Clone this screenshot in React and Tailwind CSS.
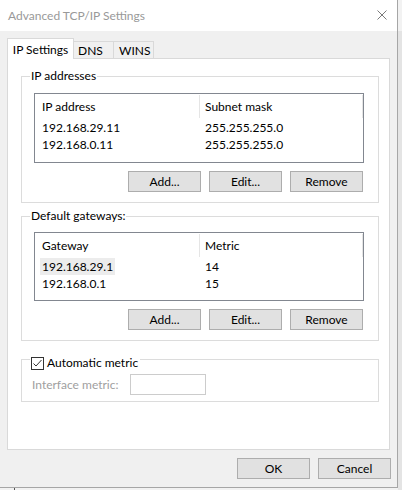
import React from "react";

// Windows-style "Advanced TCP/IP Settings" dialog

function Btn({ children, className = "" }) {
  return (
    <button
      type="button"
      className={`flex h-[21px] w-[73px] items-center justify-center border border-[#adadad] bg-[#e1e1e1] text-[12px] leading-none text-black ${className}`}
    >
      {children}
    </button>
  );
}

function ListView({ cols, rows, selected = -1, className = "" }) {
  return (
    <div className={`border border-[#828790] bg-white ${className}`}>
      <div className="flex h-[25px] items-center">
        <div className="flex h-[23px] w-[165px] items-center border-r border-[#e5e5e5] pl-[7px]">
          {cols[0]}
        </div>
        <div className="flex h-[23px] w-[163px] items-center border-r border-[#e5e5e5] pl-[5px]">
          {cols[1]}
        </div>
      </div>
      {rows.map((r, i) => (
        <div key={i} className="flex h-[17px] items-center">
          <div className="w-[165px] pl-[5px]">
            <span
              className={`inline-block w-[75px] px-[2px] leading-[17px] ${
                i === selected ? "bg-[#ececec]" : ""
              }`}
            >
              {r[0]}
            </span>
          </div>
          <div className="pl-[5px] leading-[17px]">{r[1]}</div>
        </div>
      ))}
    </div>
  );
}

function GroupBox({ label, className = "", children }) {
  return (
    <div className={`relative border border-[#dcdcdc] ${className}`}>
      <span className="absolute left-[8px] top-[-9px] bg-white px-[1px] leading-[16px]">
        {label}
      </span>
      {children}
    </div>
  );
}

export default function App() {
  return (
    <div className="relative h-[490px] w-[402px] overflow-hidden bg-[#f2f2f2] font-['Lato','Noto_Sans',sans-serif] text-[12px] text-black">
      {/* desktop strip behind the dialog */}
      <div className="absolute bottom-0 left-[14px] h-[3px] w-px bg-[#555]" />
      <div className="absolute right-0 top-[31px] h-[459px] w-[4px] bg-[#e4e4e4]" />

      <div className="relative flex h-[488px] w-[398px] flex-col border-b border-r border-[#a6a6a6] bg-[#f0f0f0]">
        {/* title bar */}
        <div className="flex h-[31px] shrink-0 items-center justify-between bg-white pl-[8px] pr-[10px]">
          <span className="text-[12px] text-[#999999]">Advanced TCP/IP Settings</span>
          <svg width="10" height="10" viewBox="0 0 10 10" className="mt-[-1px]">
            <path d="M0.5 0.5 L9.5 9.5 M9.5 0.5 L0.5 9.5" stroke="#7a7a7a" strokeWidth="1" fill="none" />
          </svg>
        </div>

        {/* tabs */}
        <div className="ml-[7px] mt-[7px] flex items-end">
          <div className="relative z-10 -mb-px flex h-[21px] w-[67px] items-start justify-center border-x border-t border-[#d9d9d9] bg-white pt-[2px]">
            IP Settings
          </div>
          <div className="flex h-[17px] w-[40px] items-center border-r border-t border-[#d9d9d9] pl-[4px] pt-[1px]">
            DNS
          </div>
          <div className="flex h-[17px] w-[40px] items-center border-r border-t border-[#d9d9d9] pl-[5px] pt-[1px]">
            WINS
          </div>
        </div>

        {/* tab page */}
        <div className="ml-[7px] h-[392px] w-[383px] border border-[#d9d9d9] bg-white px-[13px] pt-[17px]">
          <GroupBox label="IP addresses" className="h-[127px] w-[358px] pl-[12px] pt-[16px]">
            <ListView
              className="h-[70px] w-[330px]"
              cols={["IP address", "Subnet mask"]}
              rows={[
                ["192.168.29.11", "255.255.255.0"],
                ["192.168.0.11", "255.255.255.0"],
              ]}
            />
            <div className="mt-[8px] flex w-[329px] justify-end gap-[8px]">
              <Btn>Add...</Btn>
              <Btn>Edit...</Btn>
              <Btn>Remove</Btn>
            </div>
          </GroupBox>

          <GroupBox label="Default gateways:" className="mt-[13px] h-[125px] w-[358px] pl-[12px] pt-[15px]">
            <ListView
              className="h-[69px] w-[330px]"
              cols={["Gateway", "Metric"]}
              rows={[
                ["192.168.29.1", "14"],
                ["192.168.0.1", "15"],
              ]}
              selected={0}
            />
            <div className="mt-[8px] flex w-[329px] justify-end gap-[8px]">
              <Btn>Add...</Btn>
              <Btn>Edit...</Btn>
              <Btn>Remove</Btn>
            </div>
          </GroupBox>

          <div className="relative mt-[18px] h-[43px] w-[358px] border border-[#dcdcdc]">
            <div className="absolute left-[8px] top-[-5px] flex items-center gap-[3px] bg-white pl-[1px] pr-[2px]">
              <span className="flex h-[13px] w-[13px] items-center justify-center border border-[#333333] bg-white">
                <svg width="11" height="11" viewBox="0 0 11 11">
                  <path d="M1.5 5.5 L4 8 L9.5 2" stroke="#333333" strokeWidth="1" fill="none" />
                </svg>
              </span>
              <span className="leading-[16px]">Automatic metric</span>
            </div>
            <div className="flex items-center pl-[10px] pt-[14px]">
              <span className="w-[98px] text-[#a0a0a0]">Interface metric:</span>
              <div className="h-[21px] w-[76px] border border-[#cccccc] bg-white" />
            </div>
          </div>
        </div>

        {/* dialog buttons */}
        <div className="mt-[8px] flex justify-end gap-[8px] pr-[6px]">
          <Btn>OK</Btn>
          <Btn>Cancel</Btn>
        </div>
      </div>
    </div>
  );
}
